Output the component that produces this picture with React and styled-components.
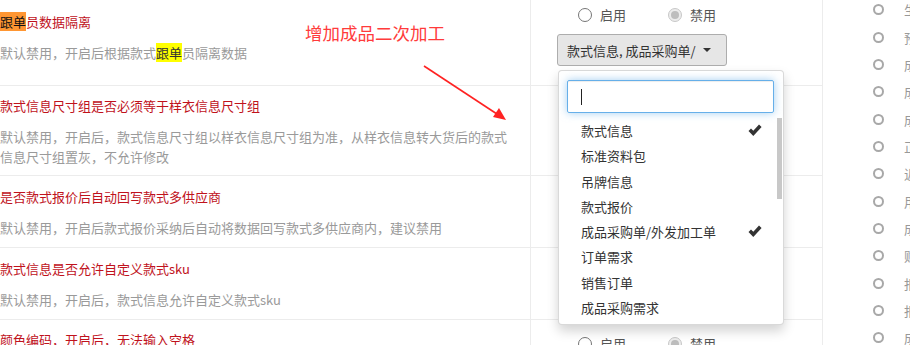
import React from "react";
import styled, { createGlobalStyle } from "styled-components";

const Global = createGlobalStyle`
  html, body { margin: 0; padding: 0; background: #fff; }
  body {
    font-family: "Noto Sans CJK SC", "Microsoft YaHei", sans-serif;
    font-size: 13px;
    color: #333;
    overflow: hidden;
  }
`;

const Page = styled.div`
  position: relative;
  display: flex;
  width: 910px;
  height: 345px;
  overflow: hidden;
`;

const Table = styled.div`
  width: 823px;
  flex: none;
  display: flex;
  flex-direction: column;
`;

const Row = styled.div`
  display: grid;
  grid-template-columns: 531px 292px;
  border-bottom: 1px solid #ececec;
  flex: none;
  height: ${(p) => p.$h}px;
  box-sizing: border-box;
`;

const Cell = styled.div`
  border-right: 1px solid #ececec;
  box-sizing: border-box;
  padding-top: ${(p) => p.$pt}px;
`;

const InfoCell = styled(Cell)`
  padding-right: 14px;
`;

const Title = styled.div`
  color: #c0121c;
  line-height: 20px;
  white-space: nowrap;
`;

const Desc = styled.div`
  color: #9a9a9a;
  line-height: 20px;
  margin-top: 11px;
`;

const ActiveMark = styled.span`
  background: #ff9632;
  color: #111;
`;

const Mark = styled.span`
  background: #ffff00;
  color: #333;
`;

const ControlCell = styled(Cell)`
  position: relative;
  padding-left: 26px;
`;

const RadioGroup = styled.div`
  display: flex;
  padding-left: 21px;
  height: 20px;
  align-items: center;
`;

const RadioLabel = styled.label`
  display: flex;
  align-items: center;
  gap: 8px;
  width: 90px;
  color: #555;
  line-height: 20px;
`;

const Circle = styled.span`
  width: 14px;
  height: 14px;
  box-sizing: border-box;
  border-radius: 50%;
  border: 1px solid ${(p) => (p.$checked ? "#c8c8c8" : "#767676")};
  background: ${(p) => (p.$checked ? "#ececec" : "#fff")};
  display: flex;
  align-items: center;
  justify-content: center;
  &::after {
    content: "";
    display: ${(p) => (p.$checked ? "block" : "none")};
    width: 8px;
    height: 8px;
    border-radius: 50%;
    background: #bdbdbd;
  }
`;

const SelectWrap = styled.div`
  position: relative;
  margin-top: 9px;
  width: 170px;
`;

const SelectButton = styled.div`
  height: 32px;
  box-sizing: border-box;
  background: #e6e6e6;
  border: 1px solid #adadad;
  border-radius: 3px;
  display: flex;
  align-items: center;
  padding-left: 9px;
  color: #333;
  white-space: nowrap;
`;

const Caret = styled.span`
  margin-left: 7px;
  width: 0;
  height: 0;
  border-left: 4px solid transparent;
  border-right: 4px solid transparent;
  border-top: 4px solid #333;
`;

const Menu = styled.div`
  position: absolute;
  top: 36px;
  left: 1px;
  width: 226px;
  height: 255px;
  box-sizing: border-box;
  background: #fff;
  border: 1px solid rgba(0, 0, 0, 0.15);
  border-radius: 4px;
  box-shadow: 0 6px 12px rgba(0, 0, 0, 0.175);
  padding: 9px 0 0 8px;
  z-index: 5;
`;

const Search = styled.div`
  width: 207px;
  height: 33px;
  box-sizing: border-box;
  border: 1px solid #66afe9;
  border-radius: 2px;
  box-shadow: inset 0 1px 1px rgba(0, 0, 0, 0.075), 0 0 8px rgba(102, 175, 233, 0.6);
  display: flex;
  align-items: center;
  padding-left: 13px;
`;

const CaretLine = styled.span`
  width: 1px;
  height: 16px;
  background: #222;
`;

const List = styled.ul`
  list-style: none;
  margin: 5px 0 0 -8px;
  padding: 0;
  position: relative;
`;

const Item = styled.li`
  height: 25.3px;
  line-height: 25.3px;
  padding-left: 22px;
  padding-right: 21px;
  display: flex;
  align-items: center;
  justify-content: space-between;
  color: #333;
  white-space: nowrap;
`;

const Thumb = styled.div`
  position: absolute;
  right: 1px;
  top: 0;
  width: 5px;
  height: 81px;
  background: #c8c8c8;
`;

const Side = styled.div`
  flex: 1;
  padding-left: 50px;
  margin-top: -4px;
`;

const SideItem = styled.div`
  height: 27.35px;
  display: flex;
  align-items: center;
  gap: 20px;
  color: #999;
  white-space: nowrap;
`;

const SideCircle = styled.span`
  width: 11px;
  height: 11px;
  box-sizing: border-box;
  border: 2px solid #a8a8a8;
  border-radius: 50%;
  flex: none;
`;

const Note = styled.div`
  position: absolute;
  left: 305px;
  top: 21px;
  font-size: 17.5px;
  line-height: 24px;
  color: #ff3b3b;
  white-space: nowrap;
  z-index: 3;
`;

const ArrowSvg = styled.svg`
  position: absolute;
  left: 420px;
  top: 62px;
  z-index: 3;
`;

const Check = () => (
  <svg width="14" height="13" viewBox="0 0 14 13">
    <path d="M0.5 7 L3 4.4 L5.3 6.7 L11 0.6 L13.6 3.1 L5.3 11.9 Z" fill="#333" />
  </svg>
);

const Radios = () => (
  <RadioGroup>
    <RadioLabel>
      <Circle />
      启用
    </RadioLabel>
    <RadioLabel>
      <Circle $checked />
      禁用
    </RadioLabel>
  </RadioGroup>
);

const options = [
  { label: "款式信息", checked: true },
  { label: "标准资料包" },
  { label: "吊牌信息" },
  { label: "款式报价" },
  { label: "成品采购单/外发加工单", checked: true },
  { label: "订单需求" },
  { label: "销售订单" },
  { label: "成品采购需求" },
];

const rows = [
  {
    h: 86,
    pt1: 12,
    pt2: 5,
    radios: true,
    title: (
      <>
        <ActiveMark>跟单</ActiveMark>员数据隔离
      </>
    ),
    desc: (
      <>
        默认禁用，开启后根据款式<Mark>跟单</Mark>员隔离数据
      </>
    ),
    select: true,
  },
  {
    h: 90,
    pt1: 10,
    pt2: 16,
    title: "款式信息尺寸组是否必须等于样衣信息尺寸组",
    desc: "默认禁用，开启后，款式信息尺寸组以样衣信息尺寸组为准，从样衣信息转大货后的款式信息尺寸组置灰，不允许修改",
  },
  {
    h: 72,
    pt1: 11,
    pt2: 16,
    title: "是否款式报价后自动回写款式多供应商",
    desc: "默认禁用，开启后款式报价采纳后自动将数据回写款式多供应商内，建议禁用",
  },
  {
    h: 72,
    pt1: 11,
    pt2: 16,
    title: "款式信息是否允许自定义款式sku",
    desc: "默认禁用，开启后，款式信息允许自定义款式sku",
  },
  {
    h: 72,
    pt1: 10,
    pt2: 14,
    radios: true,
    title: "颜色编码，开启后，无法输入空格",
    desc: "默认禁用，开启后，颜色编码无法输入空格",
  },
];

const sideChars = ["生", "预", "成", "成", "成", "正", "近", "用", "成", "财", "报", "报", "成"];

export default function App() {
  return (
    <>
      <Global />
      <Page>
        <Table>
          {rows.map((r, i) => (
            <Row key={i} $h={r.h}>
              <InfoCell $pt={r.pt1}>
                <Title>{r.title}</Title>
                <Desc>{r.desc}</Desc>
              </InfoCell>
              <ControlCell $pt={r.pt2}>
                {r.radios && <Radios />}
                {r.select && (
                  <SelectWrap>
                    <SelectButton>
                      款式信息, 成品采购单/
                      <Caret />
                    </SelectButton>
                    <Menu>
                      <Search>
                        <CaretLine />
                      </Search>
                      <List>
                        <Thumb />
                        {options.map((o) => (
                          <Item key={o.label}>
                            <span>{o.label}</span>
                            {o.checked && <Check />}
                          </Item>
                        ))}
                      </List>
                    </Menu>
                  </SelectWrap>
                )}
              </ControlCell>
            </Row>
          ))}
        </Table>
        <Side>
          {sideChars.map((c, i) => (
            <SideItem key={i}>
              <SideCircle />
              {c}
            </SideItem>
          ))}
        </Side>
        <Note>增加成品二次加工</Note>
        <ArrowSvg width="92" height="64" viewBox="0 0 92 64">
          <line x1="4" y1="4" x2="80" y2="54" stroke="#f22" strokeWidth="1.6" />
          <path d="M86 58 L73 55 L79 46 Z" fill="#f22" />
        </ArrowSvg>
      </Page>
    </>
  );
}
